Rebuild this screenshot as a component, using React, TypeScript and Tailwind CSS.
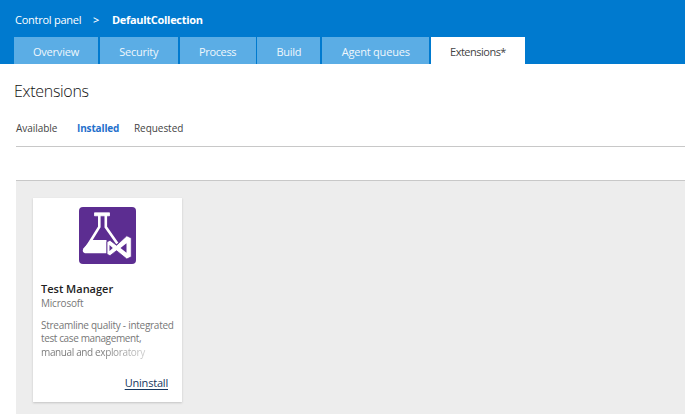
const tabs = [
  { label: 'Overview', box: 'w-[84px]', text: 'tracking-[-0.2px]' },
  { label: 'Security', box: 'w-[78px]', text: 'tracking-[-0.25px]' },
  { label: 'Process', box: 'w-[76px]', text: 'tracking-[-0.35px]' },
  { label: 'Build', box: 'w-[63px]', text: 'tracking-[-0.3px]' },
  { label: 'Agent queues', box: 'w-[107px]', text: 'tracking-[-0.2px]' },
];

function TestManagerIcon() {
  return (
    <svg viewBox="0 0 57 57" className="h-[57px] w-[57px]">
      <rect width="57" height="57" rx="4" fill="#5c2d91" />
      <path d="M15.500 5.800h15v3h-15z" fill="#fff" stroke="#fff" strokeWidth="0.8" strokeLinejoin="round" />
      <path d="M20.300 8v12L6 43M26.800 8v12l11.500 16.500" fill="none" stroke="#fff" strokeWidth="2.6" />
      <path d="M12 33h15.500v13.300H7c-3.200 0-4-2.400-2.500-5z" fill="#fff" />
      <path
        d="M28 34.800 31 33.300l6.500 5L47.800 28.800 52.300 31v18.800L47.800 52l-10.300-8.300-6.500 5-3-1.500z"
        fill="#fff"
        stroke="#5c2d91"
        strokeWidth="0.8"
      />
      <path d="M30.500 38v6l3.300-3zM47.500 36.300v9.400L41.500 41z" fill="#5c2d91" />
    </svg>
  );
}

export default function App() {
  return (
    <div className="h-[414px] w-[685px] overflow-hidden bg-white font-['Open_Sans','Noto_Sans',sans-serif] text-[11px]">
      <header className="flex h-16 flex-col justify-between bg-[#007acf] pl-[14px]">
        <nav className="flex pt-[12px] pl-px text-[11px] leading-4 whitespace-nowrap text-white">
          <span className="w-[78px] tracking-[-0.25px]">Control panel</span>
          <span className="w-[19px] font-semibold">&gt;</span>
          <span className="font-bold tracking-[-0.3px]">DefaultCollection</span>
        </nav>
        <div className="flex gap-[1.800px]">
          {tabs.map((t) => (
            <div key={t.label} className={`${t.box} h-[27px] bg-[#5bade5] text-center leading-[30px] text-[#f0f7fc]`}>
              <span className={t.text}>{t.label}</span>
            </div>
          ))}
          <div className="h-[27px] w-[94px] bg-white text-center leading-[30px] text-[#444]">
            <span className="tracking-[-0.5px]">Extensions*</span>
          </div>
        </div>
      </header>

      <h1 className="pt-[15px] pl-[14px] text-[16px] leading-6 font-light tracking-[-0.3px] text-[#111]">Extensions</h1>

      <main className="pl-4">
        <div className="flex h-[44px] border-b border-[#c8c8c8] pt-[17px] text-[10px] leading-4 text-[#444]">
          <span className="w-[61px] tracking-[-0.05px]">Available</span>
          <span className="w-[57px] font-bold tracking-[-0.15px] text-[#1f70cc]">Installed</span>
          <span className="tracking-[-0.05px]">Requested</span>
        </div>
        <div className="h-[34px] border-b border-[#c8c8c8]" />
        <section className="h-[233px] bg-[#ededed] pt-[17px] pl-[17px]">
          <article className="flex h-[204px] w-[149px] flex-col bg-white px-2 shadow-[0_1px_2px_#c4c4c4]">
            <div className="flex justify-center pt-[9px]">
              <TestManagerIcon />
            </div>
            <h2 className="mt-[17px] text-[11px] leading-4 font-semibold text-[#222]">Test Manager</h2>
            <p className="text-[10px] leading-[13px] tracking-[-0.2px] text-[#777]">Microsoft</p>
            <div className="mt-[9px] text-[10px] leading-[13.400px] whitespace-nowrap text-[#777]">
              <p className="tracking-[-0.27px]">Streamline quality - integrated</p>
              <p className="tracking-[-0.38px]">test case management,</p>
              <p className="w-[106px] bg-linear-to-r from-[#777] from-55% to-[#d0d0d0] bg-clip-text tracking-[-0.37px] text-transparent">
                manual and exploratory
              </p>
            </div>
            <div className="mt-[16px] flex justify-end pr-[6px]">
              <a className="text-[11px] leading-4 tracking-[-0.2px] text-[#17375e] underline underline-offset-2">Uninstall</a>
            </div>
          </article>
        </section>
      </main>
    </div>
  );
}
